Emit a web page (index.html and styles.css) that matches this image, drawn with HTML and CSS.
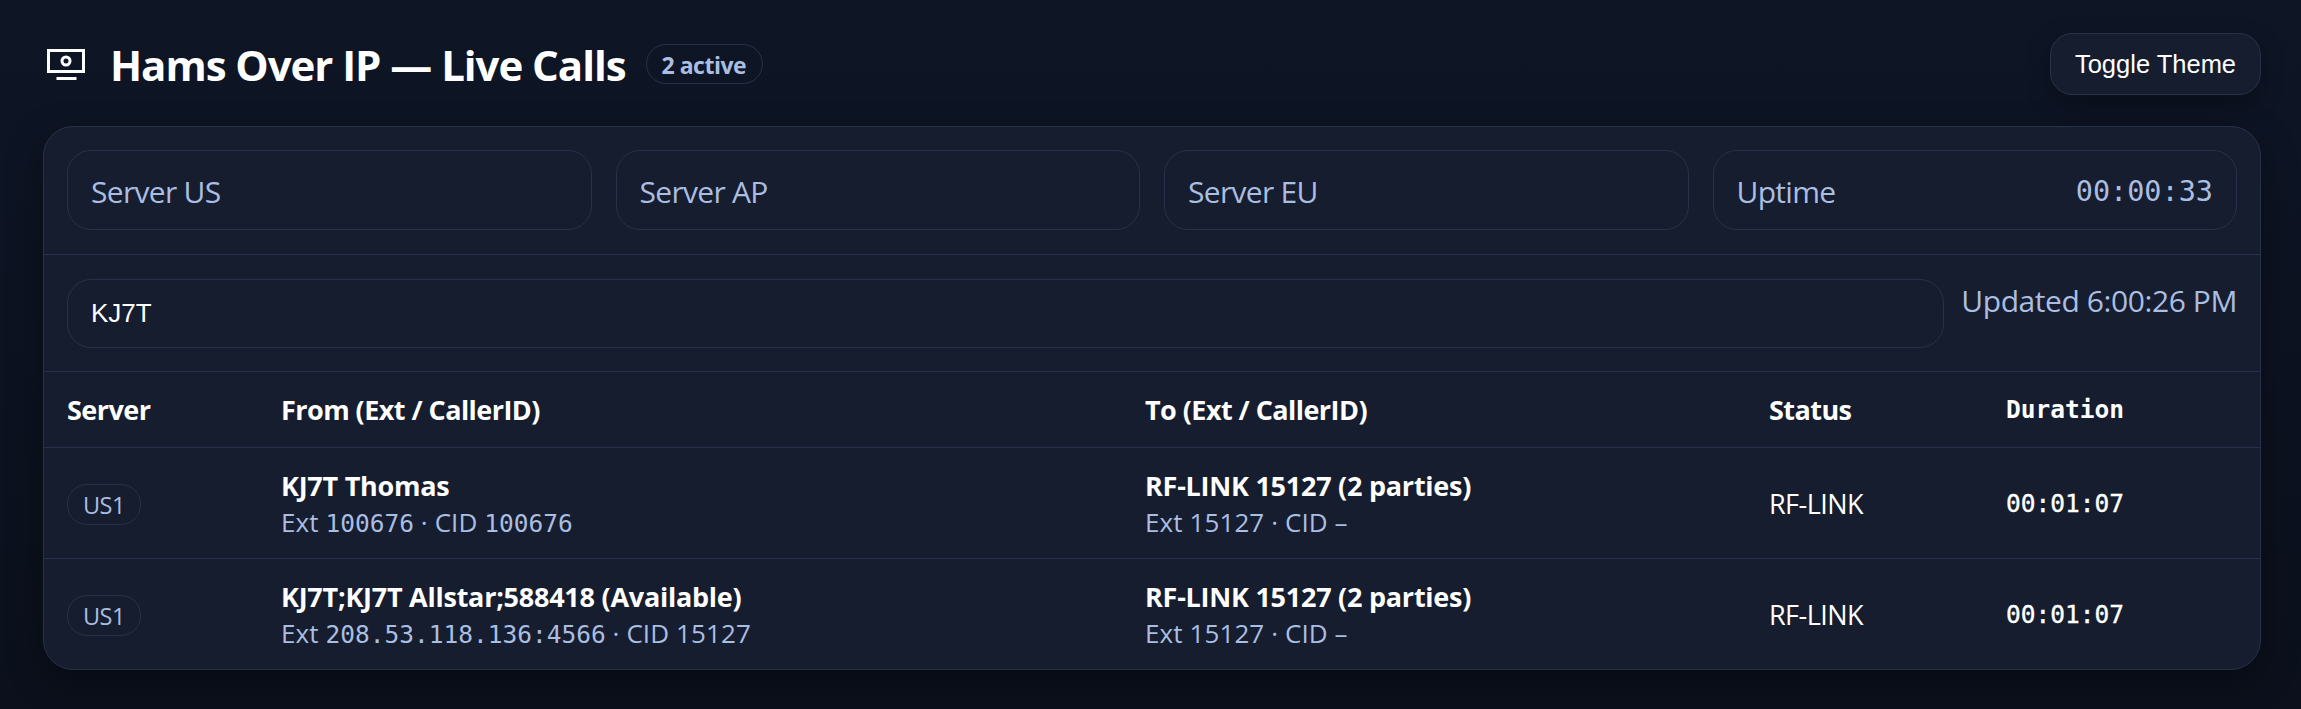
FILE: index.html
```html
<!DOCTYPE html>
<html lang="en">
<head>
  <meta charset="UTF-8">
  <title>Hams Over IP — Live Calls</title>
  <link rel="stylesheet" href="styles.css">
</head>
<body>

<header class="topbar">
  <div class="brand">
    <svg class="brand-icon" viewBox="0 0 38 32" width="38" height="32" aria-hidden="true">
      <rect x="1.5" y="1.5" width="35" height="21" fill="none" stroke="#fff" stroke-width="3"/>
      <circle cx="19" cy="12" r="4" fill="none" stroke="#fff" stroke-width="3"/>
      <rect x="9.5" y="28" width="20" height="3" fill="#fff"/>
    </svg>
    <h1>Hams Over IP — Live Calls</h1>
    <span class="count-pill">2 active</span>
  </div>
  <button class="theme-btn">Toggle Theme</button>
</header>

<main class="card">
  <section class="stats">
    <div class="stat">Server US</div>
    <div class="stat">Server AP</div>
    <div class="stat">Server EU</div>
    <div class="stat">Uptime <span class="mono">00:00:33</span></div>
  </section>

  <section class="filter">
    <input class="search" type="text" value="KJ7T">
    <div class="updated">Updated 6:00:26 PM</div>
  </section>

  <table class="calls">
    <thead>
      <tr>
        <th class="col-server">Server</th>
        <th class="col-from">From (Ext / CallerID)</th>
        <th class="col-to">To (Ext / CallerID)</th>
        <th class="col-status">Status</th>
        <th class="col-dur mono">Duration</th>
      </tr>
    </thead>
    <tbody>
      <tr>
        <td><span class="server-pill">US1</span></td>
        <td>
          <div class="who">KJ7T Thomas</div>
          <div class="sub">Ext <span class="mono">100676</span> · CID <span class="mono">100676</span></div>
        </td>
        <td>
          <div class="who">RF-LINK 15127 (2 parties)</div>
          <div class="sub">Ext 15127 · CID –</div>
        </td>
        <td>RF-LINK</td>
        <td class="mono dur">00:01:07</td>
      </tr>
      <tr>
        <td><span class="server-pill">US1</span></td>
        <td>
          <div class="who">KJ7T;KJ7T Allstar;588418 (Available)</div>
          <div class="sub">Ext <span class="mono">208.53.118.136:4566</span> · CID 15127</div>
        </td>
        <td>
          <div class="who">RF-LINK 15127 (2 parties)</div>
          <div class="sub">Ext 15127 · CID –</div>
        </td>
        <td>RF-LINK</td>
        <td class="mono dur">00:01:07</td>
      </tr>
    </tbody>
  </table>
</main>

</body>
</html>
```

FILE: styles.css
```css
* {
  box-sizing: border-box;
}

html, body {
  height: 100%;
}

body {
  margin: 0;
  padding: 33px 40px 0 43px;
  font-family: 'Open Sans', sans-serif;
  color: #fff;
  background: linear-gradient(180deg, #0e1525 0%, #0b101c 100%);
}

.mono {
  font-family: 'DejaVu Sans Mono', monospace;
}

.topbar {
  display: flex;
  justify-content: space-between;
  align-items: flex-start;
  height: 93px;
}

.brand {
  display: flex;
  align-items: center;
  height: 62px;
}

.brand-icon {
  margin: 2px 25px 0 4px;
}

h1 {
  margin: 0 20px 0 0;
  font-size: 42px;
  font-weight: 700;
  letter-spacing: -1.04px;
}

.count-pill {
  height: 40px;
  padding: 2px 16px 0 15px;
  display: flex;
  align-items: center;
  border: 1px solid #27324a;
  border-radius: 20px;
  color: #aabee2;
  font-size: 23px;
  font-weight: 700;
  letter-spacing: -0.5px;
}

.theme-btn {
  width: 211px;
  height: 62px;
  border: 1px solid #27324a;
  border-radius: 22px;
  background: #161d2e;
  color: #fff;
  font-family: 'Liberation Sans', sans-serif;
  font-size: 25.5px;
  box-shadow: 0 8px 24px rgba(0, 0, 0, 0.3);
}

.card {
  height: 544px;
  border: 1px solid #27324a;
  border-radius: 30px;
  background: #161d2e;
  overflow: hidden;
  box-shadow: 0 12px 36px rgba(0, 0, 0, 0.35);
}

.stats {
  display: grid;
  grid-template-columns: repeat(4, 1fr);
  gap: 24px;
  padding: 23px 23px 0;
  height: 128px;
  border-bottom: 1px solid #27324a;
}

.stat {
  display: flex;
  justify-content: space-between;
  align-items: center;
  height: 80px;
  padding: 2px 23px 0;
  border: 1px solid #27324a;
  border-radius: 24px;
  color: #aabee2;
  font-size: 30px;
  letter-spacing: -0.7px;
}

.stat .mono {
  font-size: 28.5px;
  letter-spacing: 0;
}

.filter {
  display: flex;
  align-items: flex-start;
  gap: 17px;
  height: 117px;
  padding: 24px 23px 0;
  border-bottom: 1px solid #27324a;
}

.search {
  flex: 1;
  height: 69px;
  padding: 0 23px;
  border: 1px solid #27324a;
  border-radius: 24px;
  background: transparent;
  color: #fff;
  font-family: 'Liberation Sans', sans-serif;
  font-size: 26px;
}

.updated {
  padding-top: 1px;
  color: #aabee2;
  font-size: 30px;
  letter-spacing: -0.42px;
}

.calls {
  width: 100%;
  border-collapse: collapse;
  table-layout: fixed;
}

.col-server { width: 214px; }
.col-from { width: 864px; }
.col-to { width: 624px; }
.col-status { width: 237px; }

.calls th, .calls td {
  padding: 0 22px 0 23px;
  text-align: left;
  font-size: 27px;
  letter-spacing: -0.55px;
}

.calls th {
  height: 75px;
  font-weight: 700;
}

.calls td {
  height: 111px;
  padding-top: 2px;
  border-top: 1px solid #27324a;
}

.calls .mono {
  font-size: 24.5px;
  letter-spacing: 0;
}

.calls th.mono {
  font-weight: 700;
}

.dur {
  font-weight: 400;
  -webkit-text-stroke: 0.35px #fff;
}

.server-pill {
  display: inline-block;
  vertical-align: middle;
  margin-top: 2px;
  padding: 4px 15px 3px;
  border: 1px solid #27324a;
  border-radius: 20px;
  color: #aabee2;
  font-size: 23.5px;
}

.who {
  font-weight: 700;
  letter-spacing: -0.25px;
}

.sub {
  color: #aabee2;
  font-size: 26px;
  letter-spacing: 0.1px;
}

.calls .sub .mono {
  font-size: 24.5px;
}
```
